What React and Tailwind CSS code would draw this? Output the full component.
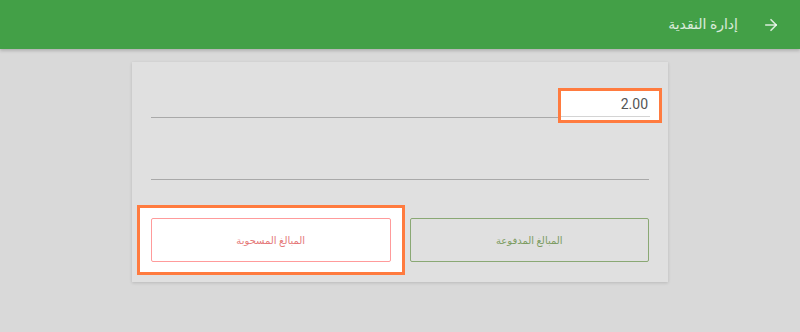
import { ArrowRight } from "lucide-react";

export default function App() {
  return (
    <div className="min-h-[332px] bg-[#d9d9d9] font-['Roboto','DejaVu_Sans',sans-serif]">
      {/* HEADER */}
      <div dir="rtl" className="h-[49px] bg-[#43a047] shadow-[0_2px_3px_rgba(0,0,0,0.18)] flex items-center pr-[20px] gap-[24px] text-white/80">
        <ArrowRight size={18} strokeWidth={2.2} />
        <span className="text-[14px] font-medium">إدارة النقدية</span>
      </div>

      {/* CARD */}
      <div className="relative mx-auto mt-[13px] w-[536px] bg-[#e0e0e0] shadow-[0_1px_3px_rgba(0,0,0,0.15)] px-[19px] pb-[20px]">
        {/* highlight box around the amount input */}
        <div className="absolute z-[5] left-[426px] top-[26px] w-[104px] h-[35px] border-[3px] border-[#ff7b3f] bg-white">
          <div className="absolute left-0 right-[9px] bottom-[3px] h-px bg-[#d4d4d4]" />
        </div>
        {/* highlight box around withdrawn button */}
        <div className="absolute left-[5px] top-[143px] w-[268px] h-[70px] border-[3px] border-[#ff7b3f] bg-white" />

        <div className="h-[56px] border-b border-[#a9a9a9] flex items-end justify-end pb-[2px]">
          <span className="relative z-10 text-[14px] text-[#555] pr-[1px]">2.00</span>
        </div>
        <div className="h-[62px] border-b border-[#a9a9a9]" />

        <div dir="rtl" className="relative z-10 mt-[38px] grid grid-cols-2 gap-[19px]">
          <button className="h-[44px] rounded-[2px] border border-[#8aa874] text-[#7d9c62] text-[10px]">
            المبالغ المدفوعة
          </button>
          <button className="h-[44px] rounded-[2px] border border-[#ff9b9b] text-[#e57a7a] text-[10px]">
            المبالغ المسحوبة
          </button>
        </div>
      </div>
    </div>
  );
}
